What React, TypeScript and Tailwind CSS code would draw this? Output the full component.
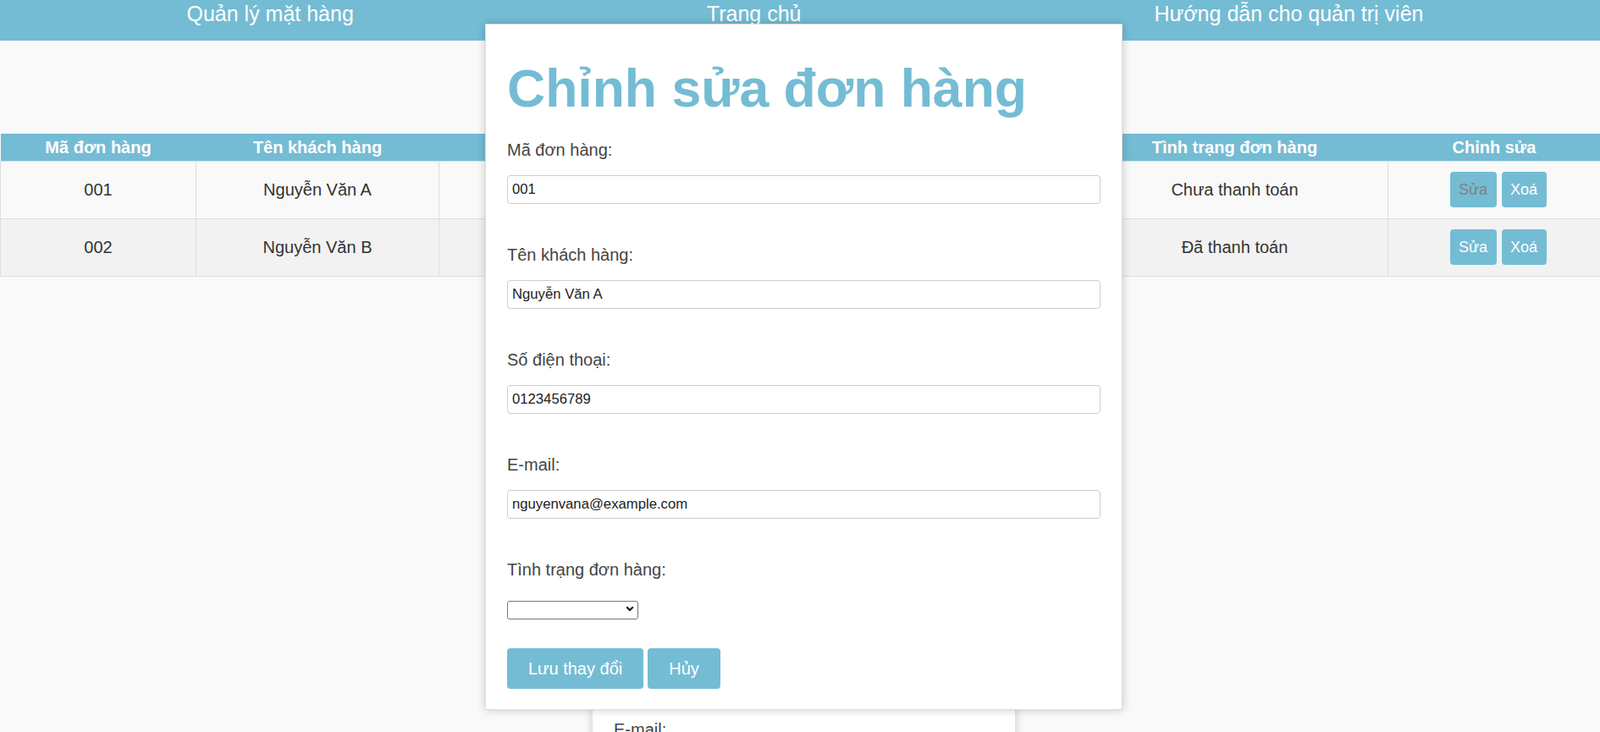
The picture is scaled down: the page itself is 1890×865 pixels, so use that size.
const navLinks: string[] = ['Quản lý mặt hàng', 'Trang chủ', 'Hướng dẫn cho quản trị viên'];

type Order = {
  id: string;
  name: string;
  phone: string;
  email: string;
  status: string;
};

const orders: Order[] = [
  { id: '001', name: 'Nguyễn Văn A', phone: '0123456789', email: 'nguyenvana@example.com', status: 'Chưa thanh toán' },
  { id: '002', name: 'Nguyễn Văn B', phone: '0987654321', email: 'nguyenvanb@example.com', status: 'Đã thanh toán' },
];

const columns: string[] = ['Mã đơn hàng', 'Tên khách hàng', 'Số điện thoại', 'E-mail', 'Tình trạng đơn hàng', 'Chỉnh sửa'];

const editFields = [
  { label: 'Mã đơn hàng:', value: '001' },
  { label: 'Tên khách hàng:', value: 'Nguyễn Văn A' },
  { label: 'Số điện thoại:', value: '0123456789' },
  { label: 'E-mail:', value: 'nguyenvana@example.com' },
];

const OrderRow = ({ order, index }: { order: Order; index: number }) => {
  const rowBg = index % 2 === 0 ? 'bg-[#f9f9f9]' : 'bg-[#f2f2f2]';
  return (
    <tr className={rowBg}>
      <td className="h-[68px] border border-[#ddd] p-0 text-center">{order.id}</td>
      <td className="border border-[#ddd] p-0 text-center">{order.name}</td>
      <td className="border border-[#ddd] p-0 text-center">{order.phone}</td>
      <td className="border border-[#ddd] p-0 text-center">{order.email}</td>
      <td className="border border-[#ddd] p-0 text-center">{order.status}</td>
      <td className="border border-[#ddd] p-0">
        <div className="flex justify-center gap-[6px] pl-[9px]">
          <button
            className={`h-[42px] w-[55px] rounded-[4px] bg-[#74bcd4] text-[18px] ${index === 0 ? 'text-[#808080]' : 'text-white'}`}
          >
            Sửa
          </button>
          <button className="h-[42px] w-[53px] rounded-[4px] bg-[#74bcd4] text-[18px] text-white">Xoá</button>
        </div>
      </td>
    </tr>
  );
};

const EditOrderModal = () => {
  return (
    <div className="absolute left-[573px] top-[28px] w-[753px] border border-[#ddd] bg-white px-[25px] pb-[24px] pt-[38px] shadow-[0_0_10px_rgba(0,0,0,0.2)]">
      <h1 className="mb-[24px] text-[62.5px] font-bold leading-[75px] text-[#74bcd4]">Chỉnh sửa đơn hàng</h1>
      {editFields.map((field, i) => (
        <div key={field.label} className={i > 0 ? 'mt-[49px]' : ''}>
          <label className="block text-[20px] leading-[23px] text-[#444]">{field.label}</label>
          <input
            readOnly
            value={field.value}
            className="mt-[18px] block h-[34px] w-full rounded-[4px] border border-[#ccc] bg-white pl-[5px] text-[16.7px] text-[#222] outline-none"
          />
        </div>
      ))}
      <div className="mt-[49px]">
        <label className="block text-[20px] leading-[23px] text-[#444]">Tình trạng đơn hàng:</label>
        <div className="relative mt-[23px] h-[22px] w-[155px]">
          <select className="h-full w-full appearance-none rounded-[3px] border border-[#767676] bg-white text-[13px]">
            <option value=""></option>
            <option value="unpaid">Chưa thanh toán</option>
            <option value="paid">Đã thanh toán</option>
          </select>
          <svg
            className="pointer-events-none absolute right-[5px] top-[8px]"
            width="10"
            height="7"
            viewBox="0 0 10 7"
            fill="none"
          >
            <path d="M1.2 1.2L5 5l3.8-3.8" stroke="#111" strokeWidth="2" />
          </svg>
        </div>
      </div>
      <div className="mt-[36px] flex gap-[5px]">
        <button className="h-[48px] rounded-[4px] bg-[#74bcd4] px-[25px] text-[20px] text-white">Lưu thay đổi</button>
        <button className="h-[48px] rounded-[4px] bg-[#74bcd4] px-[25px] text-[20px] text-white">Hủy</button>
      </div>
    </div>
  );
};

export default function App() {
  return (
    <div className="relative h-[865px] w-full overflow-hidden bg-[#f9f9f9] font-['Liberation_Sans',Arial,sans-serif] text-[#333]">
      <nav className="flex h-[48px] justify-around bg-[#74bcd4] pl-[12px] pt-[2px] text-[25px] leading-[28px] text-white">
        {navLinks.map((link) => (
          <a key={link} href="#">
            {link}
          </a>
        ))}
      </nav>

      <table className="mt-[110px] w-full table-fixed border-collapse text-[20px]">
        <colgroup>
          <col className="w-[231px]" />
          <col className="w-[287px]" />
          <col className="w-[380px]" />
          <col className="w-[379px]" />
          <col className="w-[362px]" />
          <col className="w-[251px]" />
        </colgroup>
        <thead>
          <tr className="bg-[#74bcd4]">
            {columns.map((col) => (
              <th key={col} className="h-[32px] p-0 text-center font-bold text-white">
                {col}
              </th>
            ))}
          </tr>
        </thead>
        <tbody>
          {orders.map((order, i) => (
            <OrderRow key={order.id} order={order} index={i} />
          ))}
        </tbody>
      </table>

      {/* the add-order form that sits behind the edit form */}
      <div className="absolute left-[700px] top-[600px] h-[400px] w-[499px] bg-white pl-[25px] pt-[251px] shadow-[0_0_10px_rgba(0,0,0,0.2)]">
        <label className="block text-[20px] leading-[23px] text-[#444]">E-mail:</label>
      </div>

      <EditOrderModal />
    </div>
  );
}
